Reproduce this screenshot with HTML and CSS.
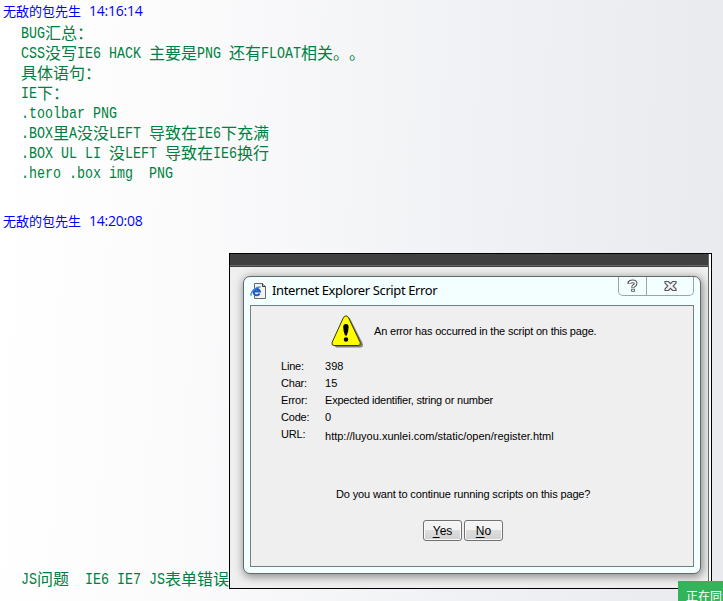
FILE: index.html
```html
<!DOCTYPE html>
<html lang="zh-CN">
<head>
<meta charset="utf-8">
<title>聊天记录</title>
<link rel="stylesheet" href="styles.css">
</head>
<body>
<main class="chat">
  <header class="sender"><span class="name">无敌的包先生</span><time>14:16:14</time></header>
  <div class="message">
    <p><span class="en">BUG</span>汇总：</p>
    <p><span class="en">CSS</span>没写<span class="en">IE6 HACK </span>主要是<span class="en">PNG </span>还有<span class="en">FLOAT</span>相关。。</p>
    <p>具体语句：</p>
    <p><span class="en">IE</span>下：</p>
    <p><span class="en">.toolbar PNG</span></p>
    <p><span class="en">.BOX</span>里<span class="en">A</span>没没<span class="en">LEFT </span>导致在<span class="en">IE6</span>下充满</p>
    <p><span class="en">.BOX UL LI </span>没<span class="en">LEFT </span>导致在<span class="en">IE6</span>换行</p>
    <p><span class="en">.hero .box img  PNG</span></p>
  </div>
  <header class="sender second"><span class="name">无敌的包先生</span><time>14:20:08</time></header>
  <div class="message with-shot">
    <p><span class="en">JS</span>问题<span class="en">  IE6 IE7 JS</span>表单错误</p>
    <div class="shot">
      <div class="shot-page">
        <div class="shot-bar"></div>
        <section class="dialog">
          <div class="titlebar">
            <svg class="ie" width="17" height="17" viewBox="0 0 17 17">
              <path d="M4.5.5h8l3 3v12h-11z" fill="#f4f4ef" stroke="#686868"/>
              <path d="M12.5.5v3h3" fill="#ccc" stroke="#333"/>
              <path d="M9.600 10.600A3.200 3.200 0 1 1 9.900 8.400H4.400" fill="none" stroke="#1f5cc4" stroke-width="2.1"/>
              <path d="M1.400 12.600C-.6 10.500 5 3.600 10.600 3.800" fill="none" stroke="#3c86dc" stroke-width="1.3"/>
            </svg>
            <h1>Internet Explorer Script Error</h1>
            <div class="controls">
              <span class="help"><svg width="12" height="14" viewBox="0 0 12 14"><path d="M2.200 4.800V4Q2.600 2.400 5.800 2.400T8.600 4.400Q8.600 6 7 6.700Q6 7.200 6 8.800M6 9.800v3" fill="none" stroke="#50505c" stroke-width="3.600"/><path d="M2.600 4.200V3.900Q3 2.400 5.800 2.400T8.600 4.400Q8.600 6 7 6.700Q6 7.200 6 8.200M6 10.500v1.500" fill="none" stroke="#fff" stroke-width="1.600"/></svg></span>
              <span class="close"><svg width="13" height="12" viewBox="0 0 13 12"><path d="M1 1.500h3.400l2.100 2.200 2.100-2.200H12v1.600L9.200 6l2.800 2.900v1.600H8.600L6.500 8.300l-2.100 2.200H1V8.900L3.800 6 1 3.100z" fill="#f0f2f4" stroke="#565664" stroke-width="1.200"/></svg></span>
            </div>
          </div>
          <div class="panel">
            <div class="alert">
              <svg width="33" height="34" viewBox="0 0 33 34">
                <path d="M17 2 L19 3.500 L31.500 28 Q33 32.500 29 32.500 H5L3 30Z" fill="#808080"/>
                <path d="M12.600 2.200Q15 -.7 17.300 2.200L29.200 27.400Q30 30.500 27.300 30.500H3Q.3 30.500 1.100 27.400Z" fill="#ff0" stroke="#34340c"/>
                <path d="M12.200 12Q12.200 9 14.900 9T17.600 12Q17.600 16 15.800 20.500H14Q12.200 16 12.200 12z"/>
                <circle cx="15" cy="24.500" r="2.200"/>
              </svg>
              <span class="t-alert">An error has occurred in the script on this page.</span>
            </div>
            <dl>
              <dt>Line:</dt><dd>398</dd>
              <dt>Char:</dt><dd>15</dd>
              <dt>Error:</dt><dd class="t-error">Expected identifier, string or number</dd>
              <dt>Code:</dt><dd>0</dd>
              <dt>URL:</dt><dd class="url">http://luyou.xunlei.com/static/open/register.html</dd>
            </dl>
            <p class="question">Do you want to continue running scripts on this page?</p>
            <div class="buttons">
              <button><u>Y</u>es</button><button><u>N</u>o</button>
            </div>
          </div>
        </section>
      </div>
    </div>
  </div>
  <div class="toast">正在同步</div>
</main>
</body>
</html>
```
FILE: styles.css
```css
* { box-sizing: border-box; margin: 0; padding: 0; }
body { width: 723px; height: 601px; overflow: hidden; }

.chat {
  position: relative;
  height: 601px;
  overflow: hidden;
  background: linear-gradient(92deg, #fff 0%, #fbfbfc 25%, #f1f2f5 62%, #e9eaee 100%);
}

.sender {
  display: flex;
  gap: 8px;
  height: 22px;
  padding-left: 3px;
  color: #00f;
  font: 13px/22px "Noto Sans CJK SC", sans-serif;
}
.sender time { font-family: "Open Sans", sans-serif; font-size: 14px; letter-spacing: -.25px; }
.second { margin-top: 28px; }

.message {
  padding-left: 21px;
  color: #008040;
  font: 16px/20px "Noto Sans CJK SC", sans-serif;
  font-kerning: none;
  text-spacing-trim: space-all;
  white-space: nowrap;
}
.message > p { height: 20px; }
.en {
  display: inline-block;
  height: 20px;
  vertical-align: top;
  white-space: pre;
  font: 13.33px/20px "Liberation Mono", monospace;
  transform: translateY(2px) scaleY(1.22);
}

.with-shot { display: flex; align-items: flex-end; margin-top: 21px; }
.with-shot > p { margin-bottom: 1px; }

.shot {
  width: 483px;
  height: 336px;
  padding-right: 2px;
  border: 1px solid #000;
  background: #fff;
}
.shot-page { height: 334px; background: #efefef; border-right: 1px solid #666; }
.shot-bar {
  height: 13px;
  background: #404040;
  border-bottom: 1px solid #404040;
  box-shadow: inset 0 -1px #686868;
}

.dialog {
  width: 458px;
  height: 298px;
  margin: 9px 0 0 13px;
  padding: 0 6px;
  border: 1px solid #626969;
  border-radius: 7px;
  background: #f3ffff;
  box-shadow: 1px 2px 8px 1px #8c8c8c;
  color: #000;
}
.titlebar { display: flex; height: 28px; }
.ie { margin: 6px 5px 0 0; }
h1 { flex: 1; font: 13px/27px "Noto Sans", sans-serif; letter-spacing: -.39px; }
.controls {
  display: flex;
  width: 76px;
  height: 19px;
  border: 1px solid #9aa5a5;
  border-top: 0;
  border-radius: 0 0 5px 5px;
}
.controls span { display: flex; align-items: center; justify-content: center; }
.help { width: 28px; border-right: 1px solid #9aa5a5; }
.close { flex: 1; }

.panel {
  height: 262px;
  border: 1px solid #758080;
  background: #efefef;
  font: 11px/17px "Liberation Sans", sans-serif;
}
.alert { display: flex; height: 43px; padding: 9px 0 0 80px; }
.t-alert { margin: 8px 0 0 10px; letter-spacing: -.19px; }
dl { display: grid; grid-template-columns: 44px 1fr; grid-auto-rows: 17px; margin: 9px 0 0 30px; }
dt { letter-spacing: -.2px; }
.t-error { letter-spacing: -.22px; }
.url { padding-top: 2px; }
.question { margin: 43px 0 0 85px; letter-spacing: -.14px; }
.buttons { display: flex; gap: 2px; margin: 17px 0 0 172px; }
button {
  width: 39px;
  height: 21px;
  padding-top: 1px;
  border: 1px solid #707070;
  border-radius: 3px;
  background: linear-gradient(#f3f3f3 48%, #dedede 50%, #d0d0d0);
  box-shadow: inset 0 0 0 1px #fafafa;
  font: 12px/18px "Liberation Sans", sans-serif;
}
button u { text-underline-offset: 2px; }

.toast {
  position: absolute;
  left: 678px;
  top: 581px;
  width: 45px;
  height: 20px;
  padding-left: 8px;
  overflow: hidden;
  background: #33b35a;
  color: #fff;
  font: 12px/30px "Noto Sans CJK SC", sans-serif;
  white-space: nowrap;
}
```
